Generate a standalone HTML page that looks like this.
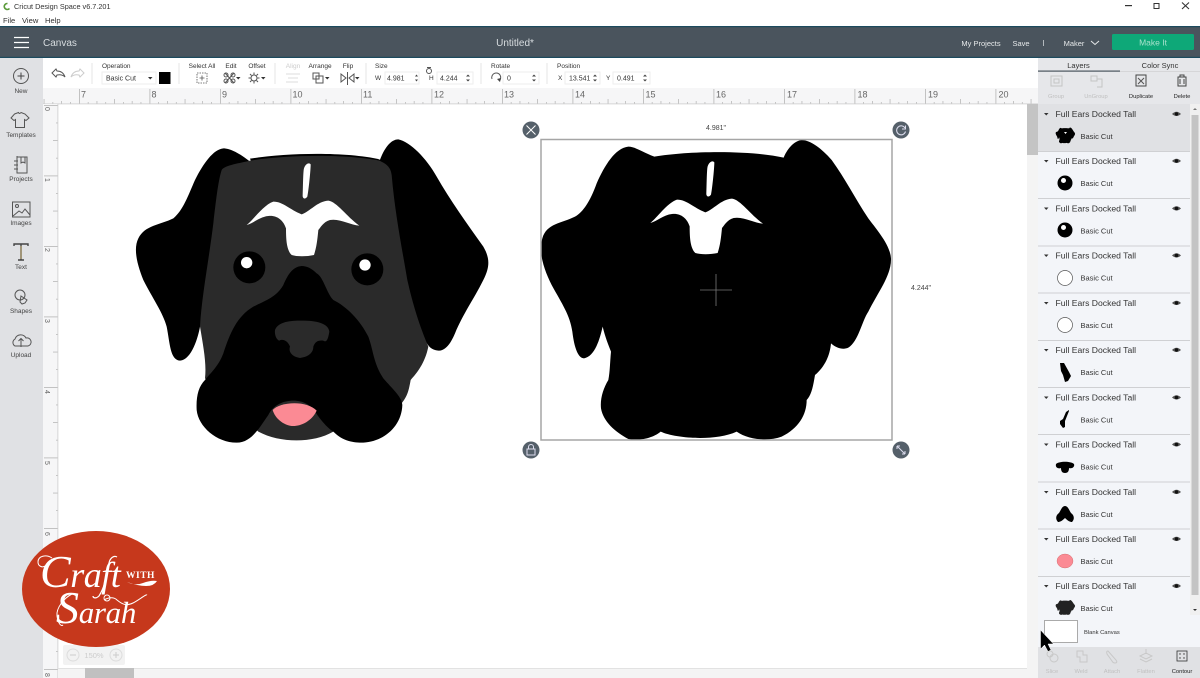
<!DOCTYPE html>
<html><head><meta charset="utf-8"><title>Cricut Design Space</title>
<style>
html,body{margin:0;padding:0;background:#fff;width:1200px;height:678px;overflow:hidden}
svg{display:block;filter:blur(.3px)}
text{font-family:"Liberation Sans",sans-serif;fill:#444}
.f{font-size:8.6px;fill:#333}
.b{font-size:7.500px;fill:#333}
.n{font-size:6.500px;fill:#444;text-anchor:middle}
.s{font-size:6.500px;fill:#333;text-anchor:middle}
.v{font-size:7px;fill:#333}
.r{font-size:9px;fill:#666}
.i{fill:none;stroke:#555;stroke-width:1}
</style></head><body>
<svg width="1200" height="678" viewBox="0 0 1200 678" xmlns="http://www.w3.org/2000/svg">
<defs>
<pattern id="hr" patternUnits="userSpaceOnUse" x="79" y="88" width="70.5" height="16">
<rect x="0" y="1" width=".8" height="15" fill="#b5b5b5"/>
<g fill="#b0b0b0"><rect x="8.8" y="14" width=".7" height="2"/><rect x="17.6" y="13" width=".7" height="3"/><rect x="26.4" y="14" width=".7" height="2"/><rect x="35.2" y="11" width=".7" height="5"/><rect x="44" y="14" width=".7" height="2"/><rect x="52.8" y="13" width=".7" height="3"/><rect x="61.6" y="14" width=".7" height="2"/></g>
</pattern>
<pattern id="vr" patternUnits="userSpaceOnUse" x="43" y="105" width="15" height="70.5">
<rect x="1" y="0" width="14" height=".8" fill="#b5b5b5"/>
<g fill="#b0b0b0"><rect x="13" y="17.6" width="2" height=".7"/><rect x="10" y="35.2" width="5" height=".7"/><rect x="13" y="52.8" width="2" height=".7"/></g>
</pattern>
<path id="blaze" d="M380,285C400,270 430,225 460,215C490,215 510,240 545,253C570,245 590,215 625,212C650,215 680,260 718,287C690,285 660,265 630,270C610,275 600,295 595,300C592,330 590,350 582,375C560,380 530,380 515,375C500,360 498,330 498,295C490,270 470,255 445,258C420,260 400,280 380,285Z"/>
<path id="stripe" d="M551,120C553,105 565,95 572,103C572,120 566,180 562,200C557,208 547,208 548,195C549,170 549,140 551,120Z"/>
<path id="sil" d="M418,125C380,110 360,95 340,95C300,100 270,150 245,205C225,260 205,290 180,305C140,325 95,325 82,370C70,410 85,460 110,510C140,565 165,600 172,650C178,700 190,730 207,730C240,725 255,670 263,635C270,665 280,690 288,710C285,740 285,770 280,795C265,820 255,850 258,880C265,920 300,950 340,972C380,980 420,965 437,950C480,970 600,980 665,950C700,975 760,980 800,965C850,940 875,900 875,855C890,840 895,810 900,780C930,755 945,720 948,685C965,700 985,705 1000,698C1030,680 1040,620 1060,590C1090,530 1130,480 1128,430C1125,390 1090,350 1060,310C1020,250 990,190 950,135C920,100 885,75 860,75C835,78 815,105 806,128C700,105 520,108 418,125Z"/>
<g id="eye"><path d="M-4.500,0Q0,-4.500 4.500,0Q0,4 -4.500,0Z" fill="#555"/><circle r="1.700" fill="#111"/></g>
<path id="tri" d="M0,0h4.500l-2.250,2.500z" fill="#333"/>
</defs>

<!-- title bar -->
<rect width="1200" height="26" fill="#fff"/>
<path d="M7.500,3.500a3,3 0 1 0 2,5" fill="none" stroke="#5a9a3a" stroke-width="1.600"/>
<text x="14" y="9" style="font-size:7.300px;fill:#333">Cricut Design Space  v6.7.201</text>
<text x="3" y="23" style="font-size:7.600px;fill:#333">File</text>
<text x="22" y="23" style="font-size:7.600px;fill:#333">View</text>
<text x="45" y="23" style="font-size:7.600px;fill:#333">Help</text>
<rect x="1125" y="5" width="7" height="1.200" fill="#333"/>
<rect x="1154" y="3.500" width="5" height="5" fill="none" stroke="#333" stroke-width="1"/>
<path d="M1182,2.500l7,6.500M1189,2.500l-7,6.500" stroke="#333" stroke-width="1.100"/>

<!-- top bar -->
<rect y="26" width="1200" height="32" fill="#4a545d"/>
<rect y="26" width="1200" height="1.200" fill="#1c4a5e"/>
<rect y="56.800" width="1200" height="1.200" fill="#1c4a5e"/>
<path d="M14,37.500h15M14,42.500h15M14,47.500h15" stroke="#fff" stroke-width="1.300"/>
<text x="43" y="46" style="font-size:10px;fill:#d8dde0">Canvas</text>
<text x="515" y="46" style="font-size:10px;fill:#d8dde0;text-anchor:middle">Untitled*</text>
<text x="981" y="46" style="font-size:7.500px;fill:#e6e9ea;text-anchor:middle">My Projects</text>
<text x="1021" y="46" style="font-size:7.500px;fill:#e6e9ea;text-anchor:middle">Save</text>
<rect x="1043" y="40" width=".8" height="6" fill="#cdd2d5"/>
<text x="1074" y="46" style="font-size:7.500px;fill:#e6e9ea;text-anchor:middle">Maker</text>
<path d="M1091,41l4,3.500 4,-3.500" fill="none" stroke="#e6e9ea" stroke-width="1"/>
<rect x="1112" y="34" width="82" height="16" rx="1.500" fill="#0ea878"/>
<text x="1153" y="45.500" style="font-size:8.500px;fill:#a9e2cd;text-anchor:middle">Make It</text>

<!-- left sidebar -->
<rect y="58" width="43" height="620" fill="#e0e1e4"/>
<circle cx="21" cy="76" r="7.500" fill="none" stroke="#555" stroke-width="1"/>
<path d="M17.500,76h7M21,72.500v7" stroke="#444" stroke-width="1"/>
<text x="21" y="93" class="n">New</text>
<path class="i" d="M16,114l4,-1.500q1,2 2.500,0l4,1.500 4,4 -3,2.500 -1.500,-1v8h-9v-8l-1.500,1 -3,-2.500z" transform="translate(-1.500,0)"/>
<text x="21" y="137" class="n">Templates</text>
<path class="i" d="M17,157h10v16h-10zM17,157v-1M21,157v6l2,-1 2,1v-6M14,161h4M14,165h4M14,169h4"/>
<text x="21" y="181" class="n">Projects</text>
<rect x="12.500" y="202" width="17.500" height="15" class="i"/>
<circle cx="17" cy="206" r="1.500" class="i"/>
<path class="i" d="M13,216l6,-5 3,2 3,-4 5,6"/>
<text x="21" y="225" class="n">Images</text>
<path d="M14,246v-2h14v2M21,244v16M18,260h6" fill="none" stroke="#444" stroke-width="1.400"/>
<path d="M21,246v13" stroke="#b89a50" stroke-width=".8"/>
<text x="21" y="269" class="n">Text</text>
<circle cx="20" cy="295" r="5" class="i"/><path class="i" d="M21,296l6,4 -2,3 -3,1 -2,-2z"/>
<text x="21" y="313" class="n">Shapes</text>
<path class="i" d="M15,346a4,4 0 0 1 0,-7a6,6 0 0 1 11,-1a4,4 0 0 1 2,8zM21,347v-8M18.500,341l2.500,-2.500 2.500,2.500"/>
<text x="21" y="357" class="n">Upload</text>

<!-- toolbar -->
<g stroke="#e4e4e4" stroke-width="1"><path d="M92,63v21M179,63v21M275,63v21M366,63v21M481,63v21M547,63v21"/></g>
<path d="M52,73l4,-4 1,2q6,0 8,6q-3,-3 -8,-2l-1,2z" fill="none" stroke="#555" stroke-width="1"/>
<path d="M84,73l-4,-4 -1,2q-6,0 -8,6q3,-3 8,-2l1,2z" fill="none" stroke="#ccc" stroke-width="1"/>
<text x="102" y="68" class="s" style="text-anchor:start">Operation</text>
<rect x="102" y="72" width="54" height="12" fill="#fff" stroke="#eee"/>
<text x="106" y="80.500" class="v">Basic Cut</text>
<use href="#tri" x="148" y="77"/>
<rect x="159" y="72" width="11.500" height="12" fill="#000"/>
<text x="202" y="68" class="s">Select All</text>
<rect x="197" y="73" width="10" height="10" fill="none" stroke="#555" stroke-width=".8" stroke-dasharray="1.500 1"/>
<path d="M199.500,78h5M202,75.500v5" stroke="#555" stroke-width=".8"/>
<text x="231" y="68" class="s">Edit</text>
<path class="i" d="M225,73l9,10M234,73l-9,10"/><circle cx="226" cy="75" r="2" class="i"/><circle cx="233" cy="75" r="2" class="i"/><circle cx="226" cy="81" r="2" class="i"/><circle cx="233" cy="81" r="2" class="i"/>
<use href="#tri" x="236" y="77"/>
<text x="257" y="68" class="s">Offset</text>
<circle cx="254" cy="78" r="3" class="i"/>
<path class="i" d="M254,72.500v2M254,81.500v2M248.500,78h2M257.500,78h2M250,74l1.500,1.500M258,74l-1.500,1.500M250,82l1.500,-1.500M258,82l-1.500,-1.500"/>
<use href="#tri" x="261" y="77"/>
<text x="293" y="68" class="s" style="fill:#ccc">Align</text>
<path d="M286,74h14M288,78h10M286,82h12" stroke="#ddd" stroke-width="1"/>
<text x="320" y="68" class="s">Arrange</text>
<rect x="313" y="73" width="6" height="6" class="i"/><rect x="316" y="76" width="7" height="7" class="i"/>
<use href="#tri" x="325" y="77"/>
<text x="348" y="68" class="s">Flip</text>
<path class="i" d="M341,74v8l5,-4zM354,74v8l-5,-4zM347.500,72v13"/>
<use href="#tri" x="355" y="77"/>
<text x="375" y="68" class="s" style="text-anchor:start">Size</text>
<text x="375" y="80" class="s" style="text-anchor:start">W</text>
<rect x="385" y="72" width="34" height="12" fill="#fff" stroke="#eee"/>
<text x="387" y="80.500" class="v">4.981</text>
<path d="M415,76.500l1.500,-2 1.500,2zM415,79.500l1.500,2 1.500,-2z" fill="#444"/>
<circle cx="429" cy="71" r="2.500" class="i"/><path d="M427,67.500h4" stroke="#555" stroke-width="1"/>
<text x="429" y="80" class="s" style="text-anchor:start">H</text>
<rect x="437" y="72" width="36" height="12" fill="#fff" stroke="#eee"/>
<text x="440" y="80.500" class="v">4.244</text>
<path d="M466,76.500l2,-2 2,2zM466,79.500l2,2 2,-2z" fill="#444"/>
<text x="491" y="68" class="s" style="text-anchor:start">Rotate</text>
<path class="i" d="M499,81a4.500,4.500 0 1 0 -7,-2" stroke-width="1.100"/>
<path d="M497,79l3,3 1,-4z" fill="#444"/>
<rect x="503" y="72" width="36" height="12" fill="#fff" stroke="#eee"/>
<text x="507" y="80.500" class="v">0</text>
<path d="M532,76.500l2,-2 2,2zM532,79.500l2,2 2,-2z" fill="#444"/>
<text x="557" y="68" class="s" style="text-anchor:start">Position</text>
<text x="558" y="80" class="s" style="text-anchor:start">X</text>
<rect x="565" y="72" width="35" height="12" fill="#fff" stroke="#eee"/>
<text x="569" y="80.500" class="v">13.541</text>
<path d="M593,76.500l2,-2 2,2zM593,79.500l2,2 2,-2z" fill="#444"/>
<text x="606" y="80" class="s" style="text-anchor:start">Y</text>
<rect x="613" y="72" width="37" height="12" fill="#fff" stroke="#eee"/>
<text x="617" y="80.500" class="v">0.491</text>
<path d="M643,76.500l2,-2 2,2zM643,79.500l2,2 2,-2z" fill="#444"/>

<!-- rulers -->
<rect x="43" y="88" width="995" height="16" fill="#f6f6f7"/>
<rect x="43" y="88" width="995" height="16" fill="url(#hr)"/>
<rect x="43" y="103.500" width="995" height=".8" fill="#ccc"/>
<g>
<text class="r" x="81" y="97.500">7</text><text class="r" x="151.500" y="97.500">8</text><text class="r" x="222" y="97.500">9</text><text class="r" x="292.500" y="97.500">10</text><text class="r" x="363" y="97.500">11</text><text class="r" x="434" y="97.500">12</text><text class="r" x="504" y="97.500">13</text><text class="r" x="575" y="97.500">14</text><text class="r" x="645.500" y="97.500">15</text><text class="r" x="716" y="97.500">16</text><text class="r" x="787" y="97.500">17</text><text class="r" x="857.500" y="97.500">18</text><text class="r" x="928" y="97.500">19</text><text class="r" x="998.500" y="97.500">20</text>
</g>
<rect x="43" y="104" width="15" height="574" fill="#f6f6f7"/>
<rect x="43" y="104" width="15" height="574" fill="url(#vr)"/>
<rect x="57.500" y="104" width=".8" height="574" fill="#ccc"/>
<g>
<text class="r" style="font-size:7px" transform="translate(45,107) rotate(90)">0</text>
<text class="r" style="font-size:7px" transform="translate(45,178) rotate(90)">1</text>
<text class="r" style="font-size:7px" transform="translate(45,248) rotate(90)">2</text>
<text class="r" style="font-size:7px" transform="translate(45,319) rotate(90)">3</text>
<text class="r" style="font-size:7px" transform="translate(45,390) rotate(90)">4</text>
<text class="r" style="font-size:7px" transform="translate(45,461) rotate(90)">5</text>
<text class="r" style="font-size:7px" transform="translate(45,532) rotate(90)">6</text>
<text class="r" style="font-size:7px" transform="translate(45,673) rotate(90)">8</text>
</g>

<!-- dog colour -->
<g transform="translate(120,130) scale(.33333)">
<path d="M390,95C360,70 330,55 310,55C280,58 250,100 225,150C205,195 190,240 160,265C120,285 75,285 55,325C40,355 50,400 70,450C95,500 130,550 140,590C150,640 150,690 180,692C215,690 235,620 240,590L400,400Z" fill="#000"/>
<path d="M778,95C790,60 810,28 835,28C870,35 920,85 950,140C990,210 1040,280 1090,350C1110,385 1110,410 1090,450C1060,510 1030,550 1005,610C990,645 975,662 955,662C935,660 925,650 915,630L700,300Z" fill="#000"/>
<path d="M390,86C500,68 680,65 778,88L790,100 L700,110 L400,110Z" fill="#000"/>
<path d="M390,92C500,74 680,72 778,92C795,100 812,108 815,135C825,250 845,350 862,450C880,530 900,590 925,650C915,700 890,730 872,750C865,790 860,800 845,820L640,905C580,940 480,940 415,905L255,745C260,700 250,650 240,590C245,500 265,400 280,280C288,210 295,150 305,120C315,105 360,100 390,92Z" fill="#2a2a2a"/>
<path d="M545,408C520,410 505,430 490,465C470,500 440,510 400,530C350,560 330,610 310,670C295,710 270,730 255,750C235,770 228,800 230,840C235,890 290,938 350,938C395,938 420,890 445,855C460,825 490,812 520,812C550,812 575,825 592,855C610,880 625,895 640,905C670,935 700,938 730,938C790,935 845,890 847,825C845,800 820,780 790,745C760,700 760,660 745,620C720,570 680,530 640,510C620,490 610,440 590,430C575,415 560,408 545,408Z" fill="#000"/>
<path d="M458,840C480,815 560,810 590,842C575,875 540,890 515,888C490,885 465,865 458,840Z" fill="#fb8a94"/>
<path d="M465,600C475,575 510,572 545,572C590,572 625,580 628,605C625,625 620,640 610,632C595,630 585,635 580,650C580,665 570,680 540,684C515,680 505,665 510,650C505,635 490,625 478,632C470,630 463,615 465,600Z" fill="#2a2a2a"/>
<circle cx="388" cy="412" r="48" fill="#000"/><circle cx="380" cy="398" r="17" fill="#fff"/>
<circle cx="742" cy="418" r="48" fill="#000"/><circle cx="735" cy="405" r="17" fill="#fff"/>
<use href="#blaze" fill="#fff"/><use href="#stripe" fill="#fff"/>
</g>

<!-- dog silhouette -->
<g transform="translate(515,115) scale(.33333)">
<use href="#sil" fill="#000"/>
<g transform="translate(26,39)"><use href="#blaze" fill="#fff"/><use href="#stripe" fill="#fff"/></g>
</g>
<rect x="541" y="139.500" width="351" height="300.500" fill="none" stroke="#a5a5a5" stroke-width="1.500"/>
<path d="M700,290h32M716,274v32" stroke="#777" stroke-width=".8"/>
<text x="716" y="130" style="font-size:7px;fill:#444;text-anchor:middle">4.981"</text>
<text x="921" y="290" style="font-size:7px;fill:#444;text-anchor:middle">4.244"</text>
<circle cx="531" cy="130" r="8.500" fill="#55606a"/>
<path d="M526.500,125.500l9,9M535.500,125.500l-9,9" stroke="#fff" stroke-width="1"/>
<circle cx="901" cy="130" r="8.500" fill="#55606a"/>
<path d="M905,128a4.500,4.500 0 1 0 .5,3.500" fill="none" stroke="#dde" stroke-width="1.100"/><path d="M905.500,125.500v3.500h-3.500" fill="none" stroke="#dde" stroke-width="1"/>
<circle cx="531" cy="450" r="8.500" fill="#55606a"/>
<rect x="527" y="449" width="8" height="6" fill="none" stroke="#dde" stroke-width="1"/><path d="M528.500,449v-2a2.500,2.500 0 0 1 5,0v2" fill="none" stroke="#dde" stroke-width="1"/>
<circle cx="901" cy="450" r="8.500" fill="#55606a"/>
<path d="M897,446l8,8M897,446h3M897,446v3M905,454h-3M905,454v-3" stroke="#dde" stroke-width="1"/>

<!-- scrollbars -->
<rect x="1027" y="104" width="11" height="574" fill="#f4f4f4"/>
<rect x="1027" y="104" width="11" height="51" fill="#c4c4c4"/>
<rect x="58" y="668" width="969" height="10" fill="#f4f4f4"/>
<rect x="58" y="668" width="969" height=".8" fill="#ddd"/>
<rect x="85" y="668" width="49" height="10" fill="#c0c0c0"/>

<!-- zoom -->
<rect x="63" y="645" width="62" height="20" rx="2" fill="#f2f2f2"/>
<circle cx="73" cy="655" r="6" fill="none" stroke="#ddd"/><path d="M70,655h6" stroke="#ccc"/>
<circle cx="116" cy="655" r="6" fill="none" stroke="#ddd"/><path d="M113,655h6M116,652v6" stroke="#ccc"/>
<text x="94" y="658" style="font-size:7.500px;fill:#ccc;text-anchor:middle">150%</text>

<!-- right panel -->
<rect x="1038" y="58" width="162" height="620" fill="#eef0f3"/>
<rect x="1038" y="58" width="162" height="46" fill="#e6e7ea"/>
<text x="1078.500" y="68" style="font-size:7.500px;fill:#333;text-anchor:middle">Layers</text>
<text x="1160" y="68" style="font-size:7.500px;fill:#333;text-anchor:middle">Color Sync</text>
<rect x="1038" y="70.500" width="82" height="1.200" fill="#4a545d"/>
<rect x="1120" y="71" width="80" height=".6" fill="#ccc"/>
<rect x="1051" y="76" width="11" height="10" fill="none" stroke="#c4c4c4"/><rect x="1054" y="79" width="5" height="4" fill="none" stroke="#c4c4c4"/>
<text x="1056" y="98" style="font-size:5.800px;fill:#c0c0c0;text-anchor:middle">Group</text>
<path d="M1091,76h6v5h-6zM1097,79h5v8h-5" fill="none" stroke="#c4c4c4"/>
<text x="1096" y="98" style="font-size:5.800px;fill:#c0c0c0;text-anchor:middle">UnGroup</text>
<rect x="1136" y="75" width="10" height="11" fill="none" stroke="#444"/><path d="M1138,78l6,6M1144,78l-6,6" stroke="#555"/>
<text x="1141" y="98" style="font-size:5.800px;fill:#222;text-anchor:middle">Duplicate</text>
<path d="M1178,77h8v9h-8zM1180,77v-2h4v2M1180,79v5M1184,79v5" fill="none" stroke="#444"/>
<text x="1182" y="98" style="font-size:5.800px;fill:#222;text-anchor:middle">Delete</text>

<!-- layers list -->
<rect x="1038" y="104" width="152" height="511" fill="#f3f5f9"/>
<rect x="1038" y="104" width="152" height="47" fill="#e0e1e4"/>
<rect x="1190" y="104" width="10" height="511" fill="#f0f0f0"/>
<rect x="1191.500" y="115" width="7" height="480" fill="#c4c4c4"/>
<path d="M1193,110l2,-2 2,2z" fill="#777"/><path d="M1193,609l2,2 2,-2z" fill="#333"/>
<g fill="#cfd0d3">
<rect x="1038" y="151" width="152" height="1"/><rect x="1038" y="198" width="152" height="1"/><rect x="1038" y="245.500" width="152" height="1"/><rect x="1038" y="292.500" width="152" height="1"/><rect x="1038" y="340" width="152" height="1"/><rect x="1038" y="387" width="152" height="1"/><rect x="1038" y="434" width="152" height="1"/><rect x="1038" y="481.500" width="152" height="1"/><rect x="1038" y="528.500" width="152" height="1"/><rect x="1038" y="576" width="152" height="1"/>
</g>

<use href="#tri" x="1044" y="113"/><text class="f" x="1055.500" y="117">Full Ears Docked Tall</text><use href="#eye" x="1176.500" y="114"/><text class="b" x="1080.500" y="139">Basic Cut</text>
<use href="#tri" x="1044" y="160"/><text class="f" x="1055.500" y="164">Full Ears Docked Tall</text><use href="#eye" x="1176.500" y="161"/><text class="b" x="1080.500" y="186">Basic Cut</text>
<use href="#tri" x="1044" y="207.500"/><text class="f" x="1055.500" y="211.500">Full Ears Docked Tall</text><use href="#eye" x="1176.500" y="208.500"/><text class="b" x="1080.500" y="233.500">Basic Cut</text>
<use href="#tri" x="1044" y="254.500"/><text class="f" x="1055.500" y="258.500">Full Ears Docked Tall</text><use href="#eye" x="1176.500" y="255.500"/><text class="b" x="1080.500" y="280.500">Basic Cut</text>
<use href="#tri" x="1044" y="302"/><text class="f" x="1055.500" y="306">Full Ears Docked Tall</text><use href="#eye" x="1176.500" y="303"/><text class="b" x="1080.500" y="328">Basic Cut</text>
<use href="#tri" x="1044" y="349"/><text class="f" x="1055.500" y="353">Full Ears Docked Tall</text><use href="#eye" x="1176.500" y="350"/><text class="b" x="1080.500" y="375">Basic Cut</text>
<use href="#tri" x="1044" y="396.500"/><text class="f" x="1055.500" y="400.500">Full Ears Docked Tall</text><use href="#eye" x="1176.500" y="397.500"/><text class="b" x="1080.500" y="422.500">Basic Cut</text>
<use href="#tri" x="1044" y="443.500"/><text class="f" x="1055.500" y="447.500">Full Ears Docked Tall</text><use href="#eye" x="1176.500" y="444.500"/><text class="b" x="1080.500" y="469.500">Basic Cut</text>
<use href="#tri" x="1044" y="491"/><text class="f" x="1055.500" y="495">Full Ears Docked Tall</text><use href="#eye" x="1176.500" y="492"/><text class="b" x="1080.500" y="517">Basic Cut</text>
<use href="#tri" x="1044" y="538"/><text class="f" x="1055.500" y="542">Full Ears Docked Tall</text><use href="#eye" x="1176.500" y="539"/><text class="b" x="1080.500" y="564">Basic Cut</text>
<use href="#tri" x="1044" y="585"/><text class="f" x="1055.500" y="589">Full Ears Docked Tall</text><use href="#eye" x="1176.500" y="586"/><text class="b" x="1080.500" y="611">Basic Cut</text>

<!-- thumbs -->
<g transform="translate(1055.500,127.500) scale(.0185 .0175) translate(-70,-75)"><use href="#sil" fill="#000"/></g>
<path d="M1064,132l3,0 -1.500,2z" fill="#fff"/>
<circle cx="1065" cy="183" r="7.500" fill="#000"/><circle cx="1063.500" cy="180.500" r="2.500" fill="#fff"/>
<circle cx="1065" cy="230" r="7.500" fill="#000"/><circle cx="1063.500" cy="227.500" r="2.500" fill="#fff"/>
<circle cx="1065" cy="278" r="7.500" fill="#fff" stroke="#555" stroke-width=".7"/>
<circle cx="1065" cy="325" r="7.500" fill="#fff" stroke="#555" stroke-width=".7"/>
<path d="M1060,363l4,0 5,9 2,4 -3,5 -3,1 -2,-7 -2,-4z" fill="#000"/>
<path d="M1069,410l-3,2 -3,7 -3,2 0,3 3,4 2,-1 0,-6 2,-5 2,-5z" fill="#000"/>
<path d="M1056,464c3,-3 15,-3 18,0c1,3 -2,5 -5,4c0,3 -1,5 -4,5c-3,0 -4,-2 -4,-5c-2,1 -6,0 -5,-4z" fill="#000"/>
<path d="M1065,506c3,0 4,4 6,7c3,2 4,6 1,9c-2,0 -4,-1 -7,-4c-3,3 -5,4 -7,4c-3,-3 -2,-7 1,-9c2,-3 3,-7 6,-7z" fill="#000"/>
<ellipse cx="1065" cy="561" rx="8" ry="7" fill="#fb8a94" stroke="#c66" stroke-width=".4"/>
<g transform="translate(1055.500,600) scale(.0185 .0165) translate(-70,-75)"><use href="#sil" fill="#222"/></g>

<!-- blank canvas -->
<rect x="1038" y="615" width="162" height="32" fill="#f3f5f9"/>
<rect x="1044.500" y="620.500" width="33" height="22" fill="#fff" stroke="#aaa"/>
<text x="1084" y="634" style="font-size:5.800px;fill:#333">Blank Canvas</text>
<rect x="1038" y="647" width="162" height="31" fill="#e0e1e4"/>
<g fill="none" stroke="#c8c8c8">
<circle cx="1050" cy="654" r="3"/><circle cx="1054" cy="658" r="4"/>
<path d="M1077,651h6v4h4v7h-7v-5h-3z"/>
<path d="M1108,651l8,9q2,3 -1,3q-2,0 -3,-2l-5,-7q-1,-3 1,-3z"/>
<path d="M1140,656l6,-3 6,3 -6,3zM1140,659l6,3 6,-3M1146,649v5"/>
</g>
<rect x="1177" y="651" width="10" height="10" fill="none" stroke="#333" stroke-width=".8"/>
<circle cx="1180" cy="654" r=".7" fill="#333"/><circle cx="1184" cy="654" r=".7" fill="#333"/><circle cx="1180" cy="658" r=".7" fill="#333"/><circle cx="1184" cy="658" r=".7" fill="#333"/>
<text x="1052" y="673" style="font-size:5.800px;fill:#c0c0c0;text-anchor:middle">Slice</text>
<text x="1081" y="673" style="font-size:5.800px;fill:#c0c0c0;text-anchor:middle">Weld</text>
<text x="1112" y="673" style="font-size:5.800px;fill:#c0c0c0;text-anchor:middle">Attach</text>
<text x="1146" y="673" style="font-size:5.800px;fill:#c0c0c0;text-anchor:middle">Flatten</text>
<text x="1182" y="673" style="font-size:5.800px;fill:#222;text-anchor:middle">Contour</text>

<!-- cursor -->
<path d="M1040.500,630l0,19 4,-4 3.500,6.500 3,-1.500 -3,-6 5.500,0z" fill="#000" stroke="#fff" stroke-width=".5"/>

<!-- logo -->
<ellipse cx="96" cy="589" rx="74" ry="58" fill="#c6381c"/>
<text x="40" y="587" style="font-family:'Liberation Serif',serif;font-style:italic;font-size:36px;fill:#fff;letter-spacing:-.5px"><tspan style="font-size:46px">C</tspan>raft</text>
<path d="M52,558c-6,-4 -14,-2 -14,4c0,4 4,6 7,4" fill="none" stroke="#fff" stroke-width="1"/>
<path d="M117,557c-3,-2 -7,1 -8,6c-2,9 -3,22 -10,33c-3,3 -6,2 -6,0" fill="none" stroke="#fff" stroke-width="1.200"/>
<text x="126" y="578" style="font-family:'Liberation Serif',serif;font-weight:bold;font-size:9.500px;fill:#fff;letter-spacing:.5px">WITH</text>
<path d="M127,582q8,4 16,1t14,-2q-3,5 -11,5t-19,-4z" fill="#fff"/>
<text x="56" y="623" style="font-family:'Liberation Serif',serif;font-style:italic;font-size:31px;fill:#fff;letter-spacing:-.3px"><tspan style="font-size:46px">S</tspan>arah</text>
<path d="M104,600c5,-3 10,-3 13,0c6,5 10,6 16,3c6,-3 13,-9 14,-8" fill="none" stroke="#fff" stroke-width="1"/>
<circle cx="107" cy="598" r="3" fill="none" stroke="#fff" stroke-width="1"/>
<path d="M72,594c-8,4 -16,14 -15,22c1,7 4,11 6,9" fill="none" stroke="#fff" stroke-width="1"/>
</svg>
</body></html>
